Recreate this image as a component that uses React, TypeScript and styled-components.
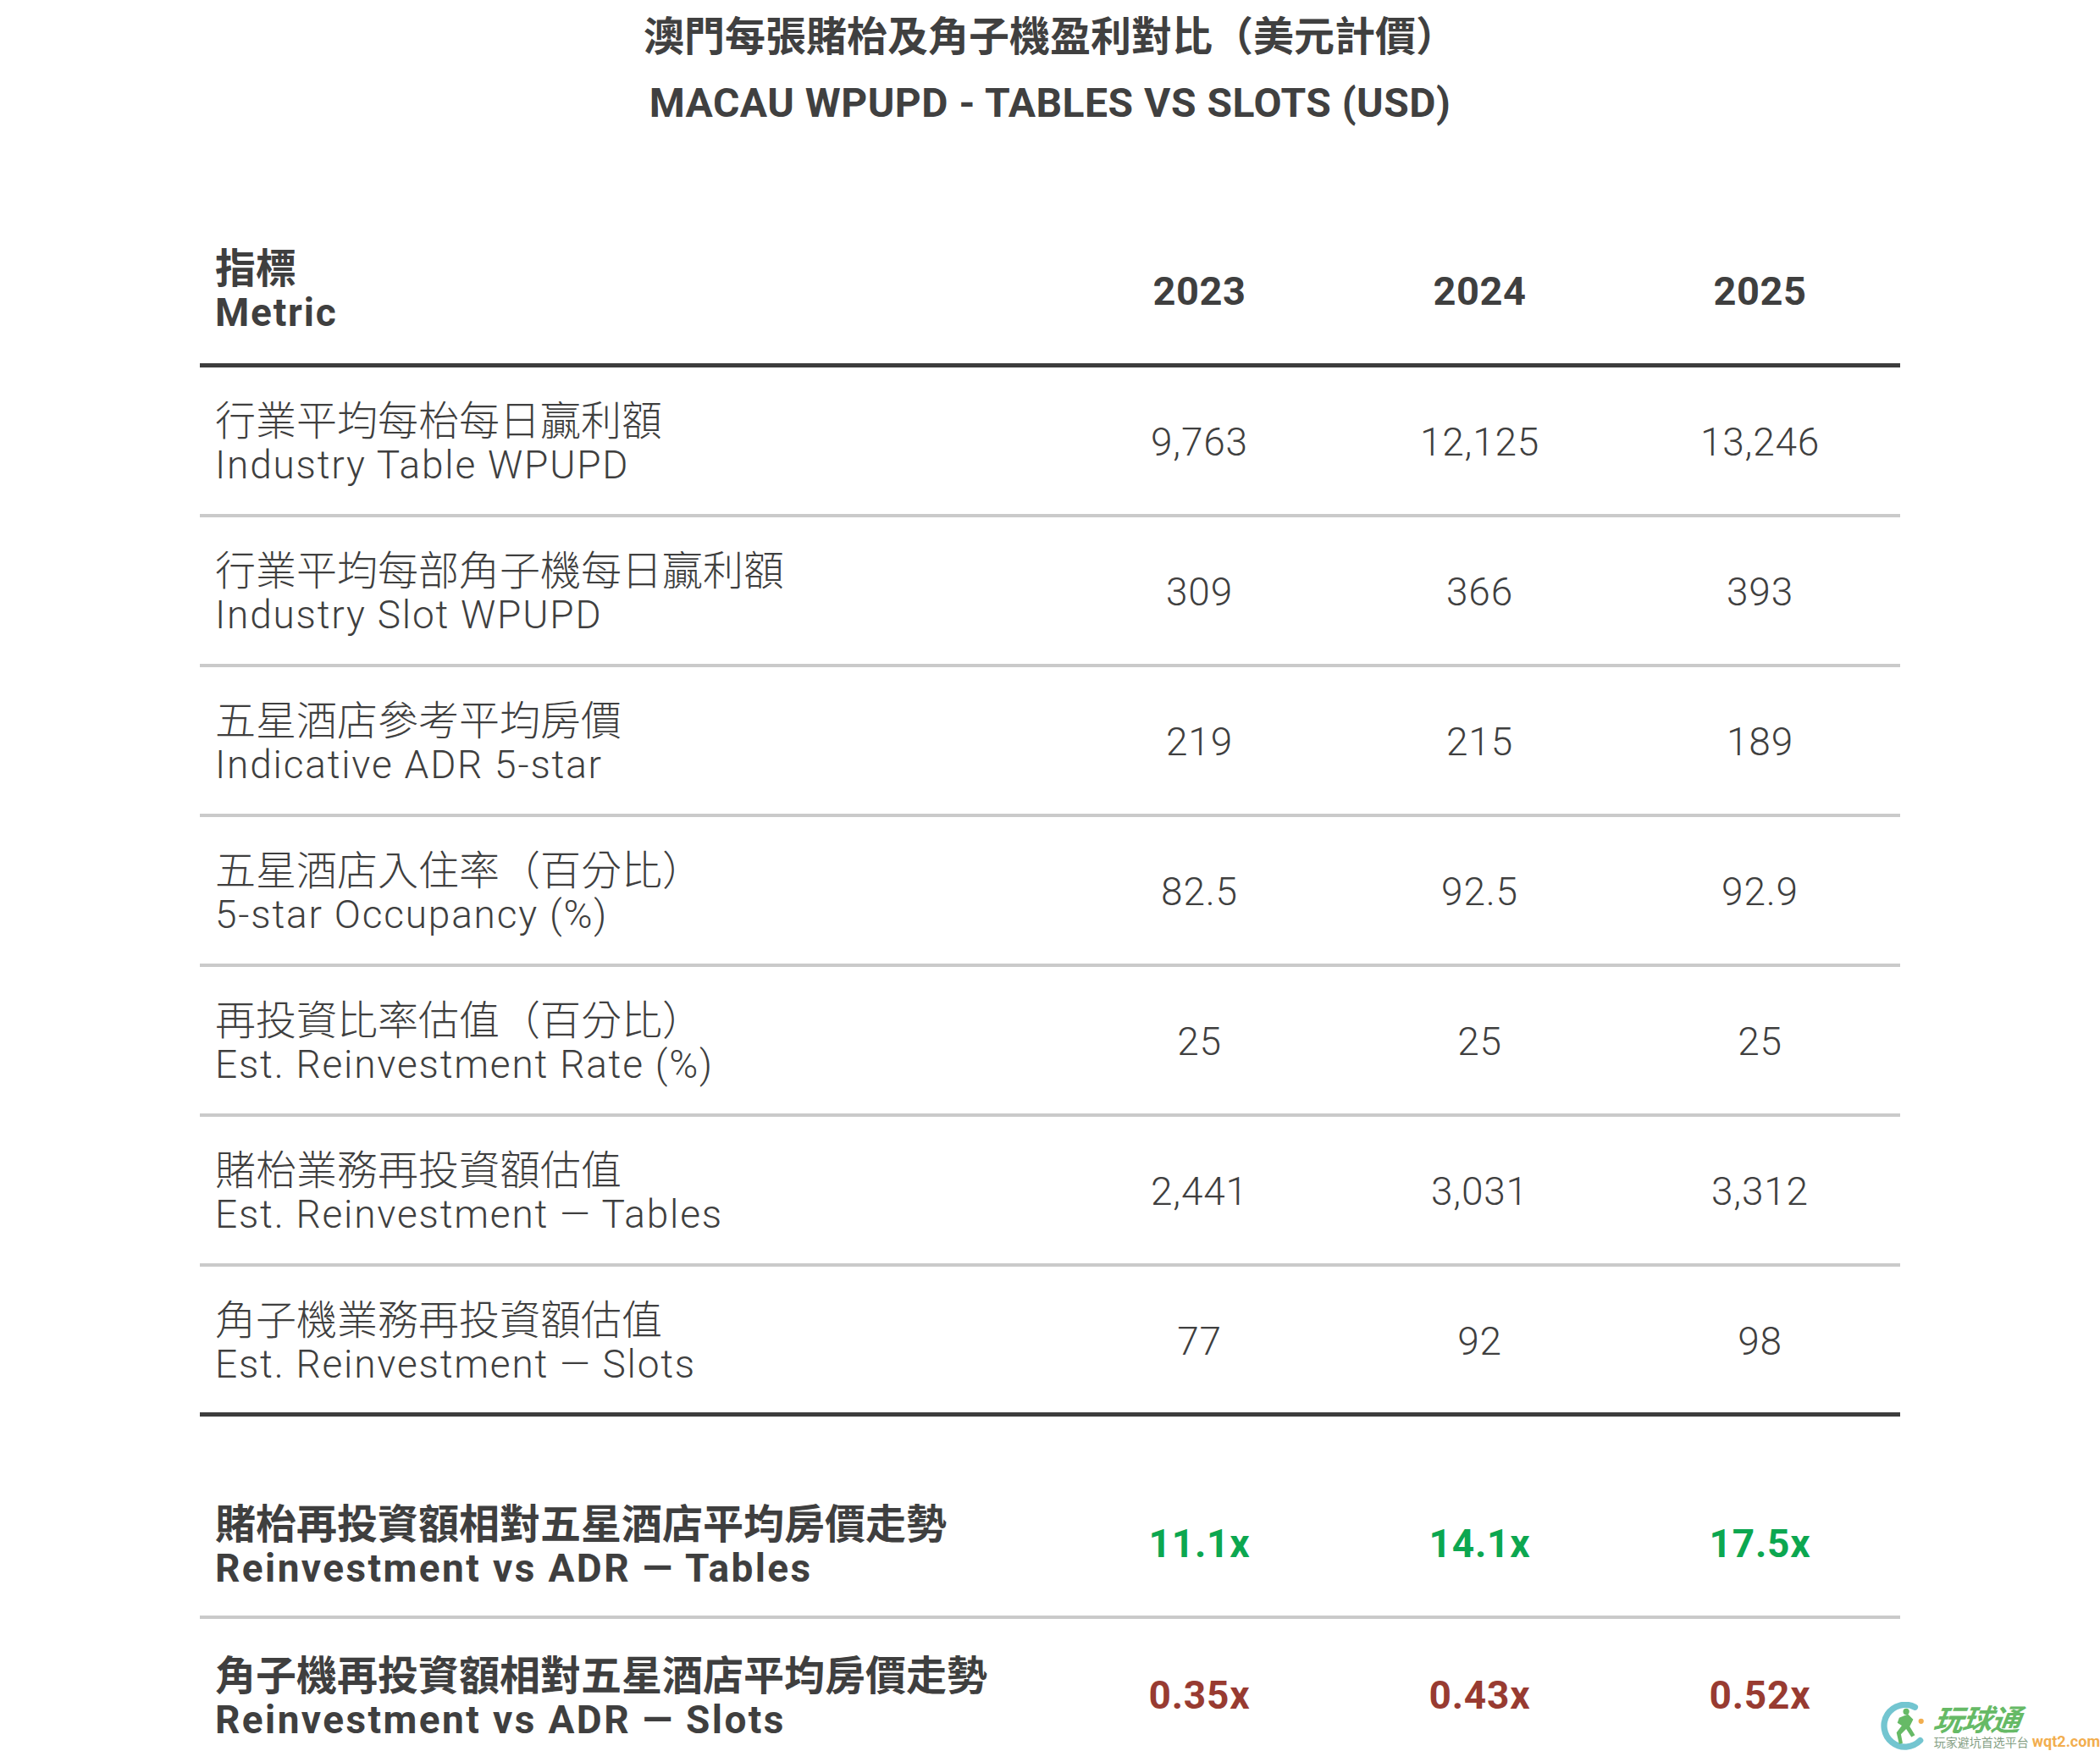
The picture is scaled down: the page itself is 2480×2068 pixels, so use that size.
import styled, { createGlobalStyle } from "styled-components";

const GlobalStyle = createGlobalStyle`
  html, body {
    margin: 0;
    padding: 0;
    background: #ffffff;
  }
  body {
    font-family: Roboto, "Noto Sans CJK TC", "Noto Sans", sans-serif;
    color: #3f3f3f;
  }
`;

const YEAR_COL = 331;
const ROW_HEIGHT = 177;

type Tone = "plain" | "good" | "bad";

interface Metric {
  zh: string;
  en: string;
  values: string[];
}

const METRICS: Metric[] = [
  { zh: "行業平均每枱每日贏利額", en: "Industry Table WPUPD", values: ["9,763", "12,125", "13,246"] },
  { zh: "行業平均每部角子機每日贏利額", en: "Industry Slot WPUPD", values: ["309", "366", "393"] },
  { zh: "五星酒店參考平均房價", en: "Indicative ADR 5-star", values: ["219", "215", "189"] },
  { zh: "五星酒店入住率（百分比）", en: "5-star Occupancy (%)", values: ["82.5", "92.5", "92.9"] },
  { zh: "再投資比率估值（百分比）", en: "Est. Reinvestment Rate (%)", values: ["25", "25", "25"] },
  { zh: "賭枱業務再投資額估值", en: "Est. Reinvestment — Tables", values: ["2,441", "3,031", "3,312"] },
  { zh: "角子機業務再投資額估值", en: "Est. Reinvestment — Slots", values: ["77", "92", "98"] },
];

const SUMMARY: (Metric & { tone: Tone })[] = [
  {
    zh: "賭枱再投資額相對五星酒店平均房價走勢",
    en: "Reinvestment vs ADR — Tables",
    values: ["11.1x", "14.1x", "17.5x"],
    tone: "good",
  },
  {
    zh: "角子機再投資額相對五星酒店平均房價走勢",
    en: "Reinvestment vs ADR — Slots",
    values: ["0.35x", "0.43x", "0.52x"],
    tone: "bad",
  },
];

const Page = styled.div`
  position: relative;
  width: 2480px;
  height: 2068px;
  overflow: hidden;
  display: flex;
  flex-direction: column;
  align-items: center;
`;

const Title = styled.h1`
  margin: 0;
  padding-top: 5px;
  display: flex;
  flex-direction: column;
  align-items: center;
  font-size: 48px;
  line-height: 78px;
  font-weight: 700;
  color: #404040;
`;

const TitleLine = styled.span<{ $latin?: boolean }>`
  letter-spacing: ${({ $latin }) => ($latin ? "0.5px" : "0")};
`;

const Table = styled.div`
  width: 2008px;
  margin-top: 96px;
  display: flex;
  flex-direction: column;
`;

const Row = styled.div<{ $border: "dark" | "light" | "none" }>`
  box-sizing: border-box;
  height: ${ROW_HEIGHT}px;
  display: grid;
  grid-template-columns: 1fr repeat(3, ${YEAR_COL}px);
  align-items: center;
  border-bottom: ${({ $border }) =>
    $border === "dark"
      ? "5px solid #3d3d3d"
      : $border === "light"
      ? "4px solid #cacaca"
      : "none"};
`;

const Spacer = styled.div`
  height: 62px;
`;

const Label = styled.div<{ $bold?: boolean }>`
  padding-left: 18px;
  padding-top: ${({ $bold }) => ($bold ? 10 : 7)}px;
  display: flex;
  flex-direction: column;
  font-weight: ${({ $bold }) => ($bold ? 700 : 300)};
`;

const LabelZh = styled.span`
  font-size: 48px;
  line-height: 50px;
`;

const LabelEn = styled.span<{ $bold?: boolean }>`
  font-size: 46px;
  line-height: 52px;
  letter-spacing: ${({ $bold }) => ($bold ? 2.4 : 1.8)}px;
`;

const HeadLabel = styled.div`
  padding-left: 18px;
  padding-top: 2px;
  display: flex;
  flex-direction: column;
  font-weight: 700;
`;

const Year = styled.div`
  text-align: center;
  font-size: 47px;
  font-weight: 700;
  letter-spacing: 0.5px;
`;

const Value = styled.div<{ $tone: Tone }>`
  text-align: center;
  font-size: 46px;
  padding-top: 3px;
  letter-spacing: 0.8px;
  font-weight: ${({ $tone }) => ($tone === "plain" ? 300 : 700)};
  color: ${({ $tone }) =>
    $tone === "good" ? "#0ca750" : $tone === "bad" ? "#983b31" : "#3f3f3f"};
`;

const Watermark = styled.div`
  position: absolute;
  right: 0;
  bottom: 0;
  display: flex;
  align-items: flex-end;
  gap: 8px;
  opacity: 0.85;
`;

const MarkText = styled.div`
  display: flex;
  flex-direction: column;
  padding-bottom: 2px;
`;

const MarkName = styled.span`
  font-family: "Noto Sans CJK SC", sans-serif;
  font-size: 35px;
  line-height: 38px;
  font-weight: 700;
  font-style: italic;
  color: #4cae4c;
  letter-spacing: -1px;
  transform: skewX(-8deg);
`;

const MarkSub = styled.span`
  font-family: "Noto Sans CJK SC", sans-serif;
  font-size: 14px;
  line-height: 18px;
  color: #6f8f6f;
  white-space: nowrap;

  b {
    font-family: Roboto, sans-serif;
    font-weight: 700;
    font-size: 18px;
    color: #f0a030;
    margin-left: 4px;
  }
`;

function LogoBall() {
  return (
    <svg width="56" height="58" viewBox="0 0 54 56">
      <path
        d="M40 6 A24 24 0 1 0 46 44"
        fill="none"
        stroke="#5bbcc8"
        strokeWidth="7"
        strokeLinecap="round"
      />
      <path
        d="M22 18 l10 -4 l6 6 l-4 8 l6 10 l-4 2 l-6 -9 l-6 6 l2 10 l-4 1 l-3 -13 l6 -8 l-5 -3 z"
        fill="#4cae4c"
      />
      <circle cx="30" cy="11" r="3.5" fill="#4cae4c" />
      <circle cx="47" cy="22" r="3" fill="#f0a030" />
    </svg>
  );
}

export default function App() {
  return (
    <Page>
      <GlobalStyle />
      <Title>
        <TitleLine>澳門每張賭枱及角子機盈利對比（美元計價）</TitleLine>
        <TitleLine $latin>MACAU WPUPD - TABLES VS SLOTS (USD)</TitleLine>
      </Title>

      <Table>
        <Row $border="dark">
          <HeadLabel>
            <LabelZh>指標</LabelZh>
            <LabelEn>Metric</LabelEn>
          </HeadLabel>
          <Year>2023</Year>
          <Year>2024</Year>
          <Year>2025</Year>
        </Row>

        {METRICS.map((m, i) => (
          <Row key={m.en} $border={i === METRICS.length - 1 ? "dark" : "light"}>
            <Label>
              <LabelZh>{m.zh}</LabelZh>
              <LabelEn>{m.en}</LabelEn>
            </Label>
            {m.values.map((v, j) => (
              <Value key={j} $tone="plain">
                {v}
              </Value>
            ))}
          </Row>
        ))}

        <Spacer />

        {SUMMARY.map((m, i) => (
          <Row key={m.en} $border={i === SUMMARY.length - 1 ? "none" : "light"}>
            <Label $bold>
              <LabelZh>{m.zh}</LabelZh>
              <LabelEn $bold>{m.en}</LabelEn>
            </Label>
            {m.values.map((v, j) => (
              <Value key={j} $tone={m.tone}>
                {v}
              </Value>
            ))}
          </Row>
        ))}
      </Table>

      <Watermark>
        <LogoBall />
        <MarkText>
          <MarkName>玩球通</MarkName>
          <MarkSub>
            玩家避坑首选平台<b>wqt2.com</b>
          </MarkSub>
        </MarkText>
      </Watermark>
    </Page>
  );
}
